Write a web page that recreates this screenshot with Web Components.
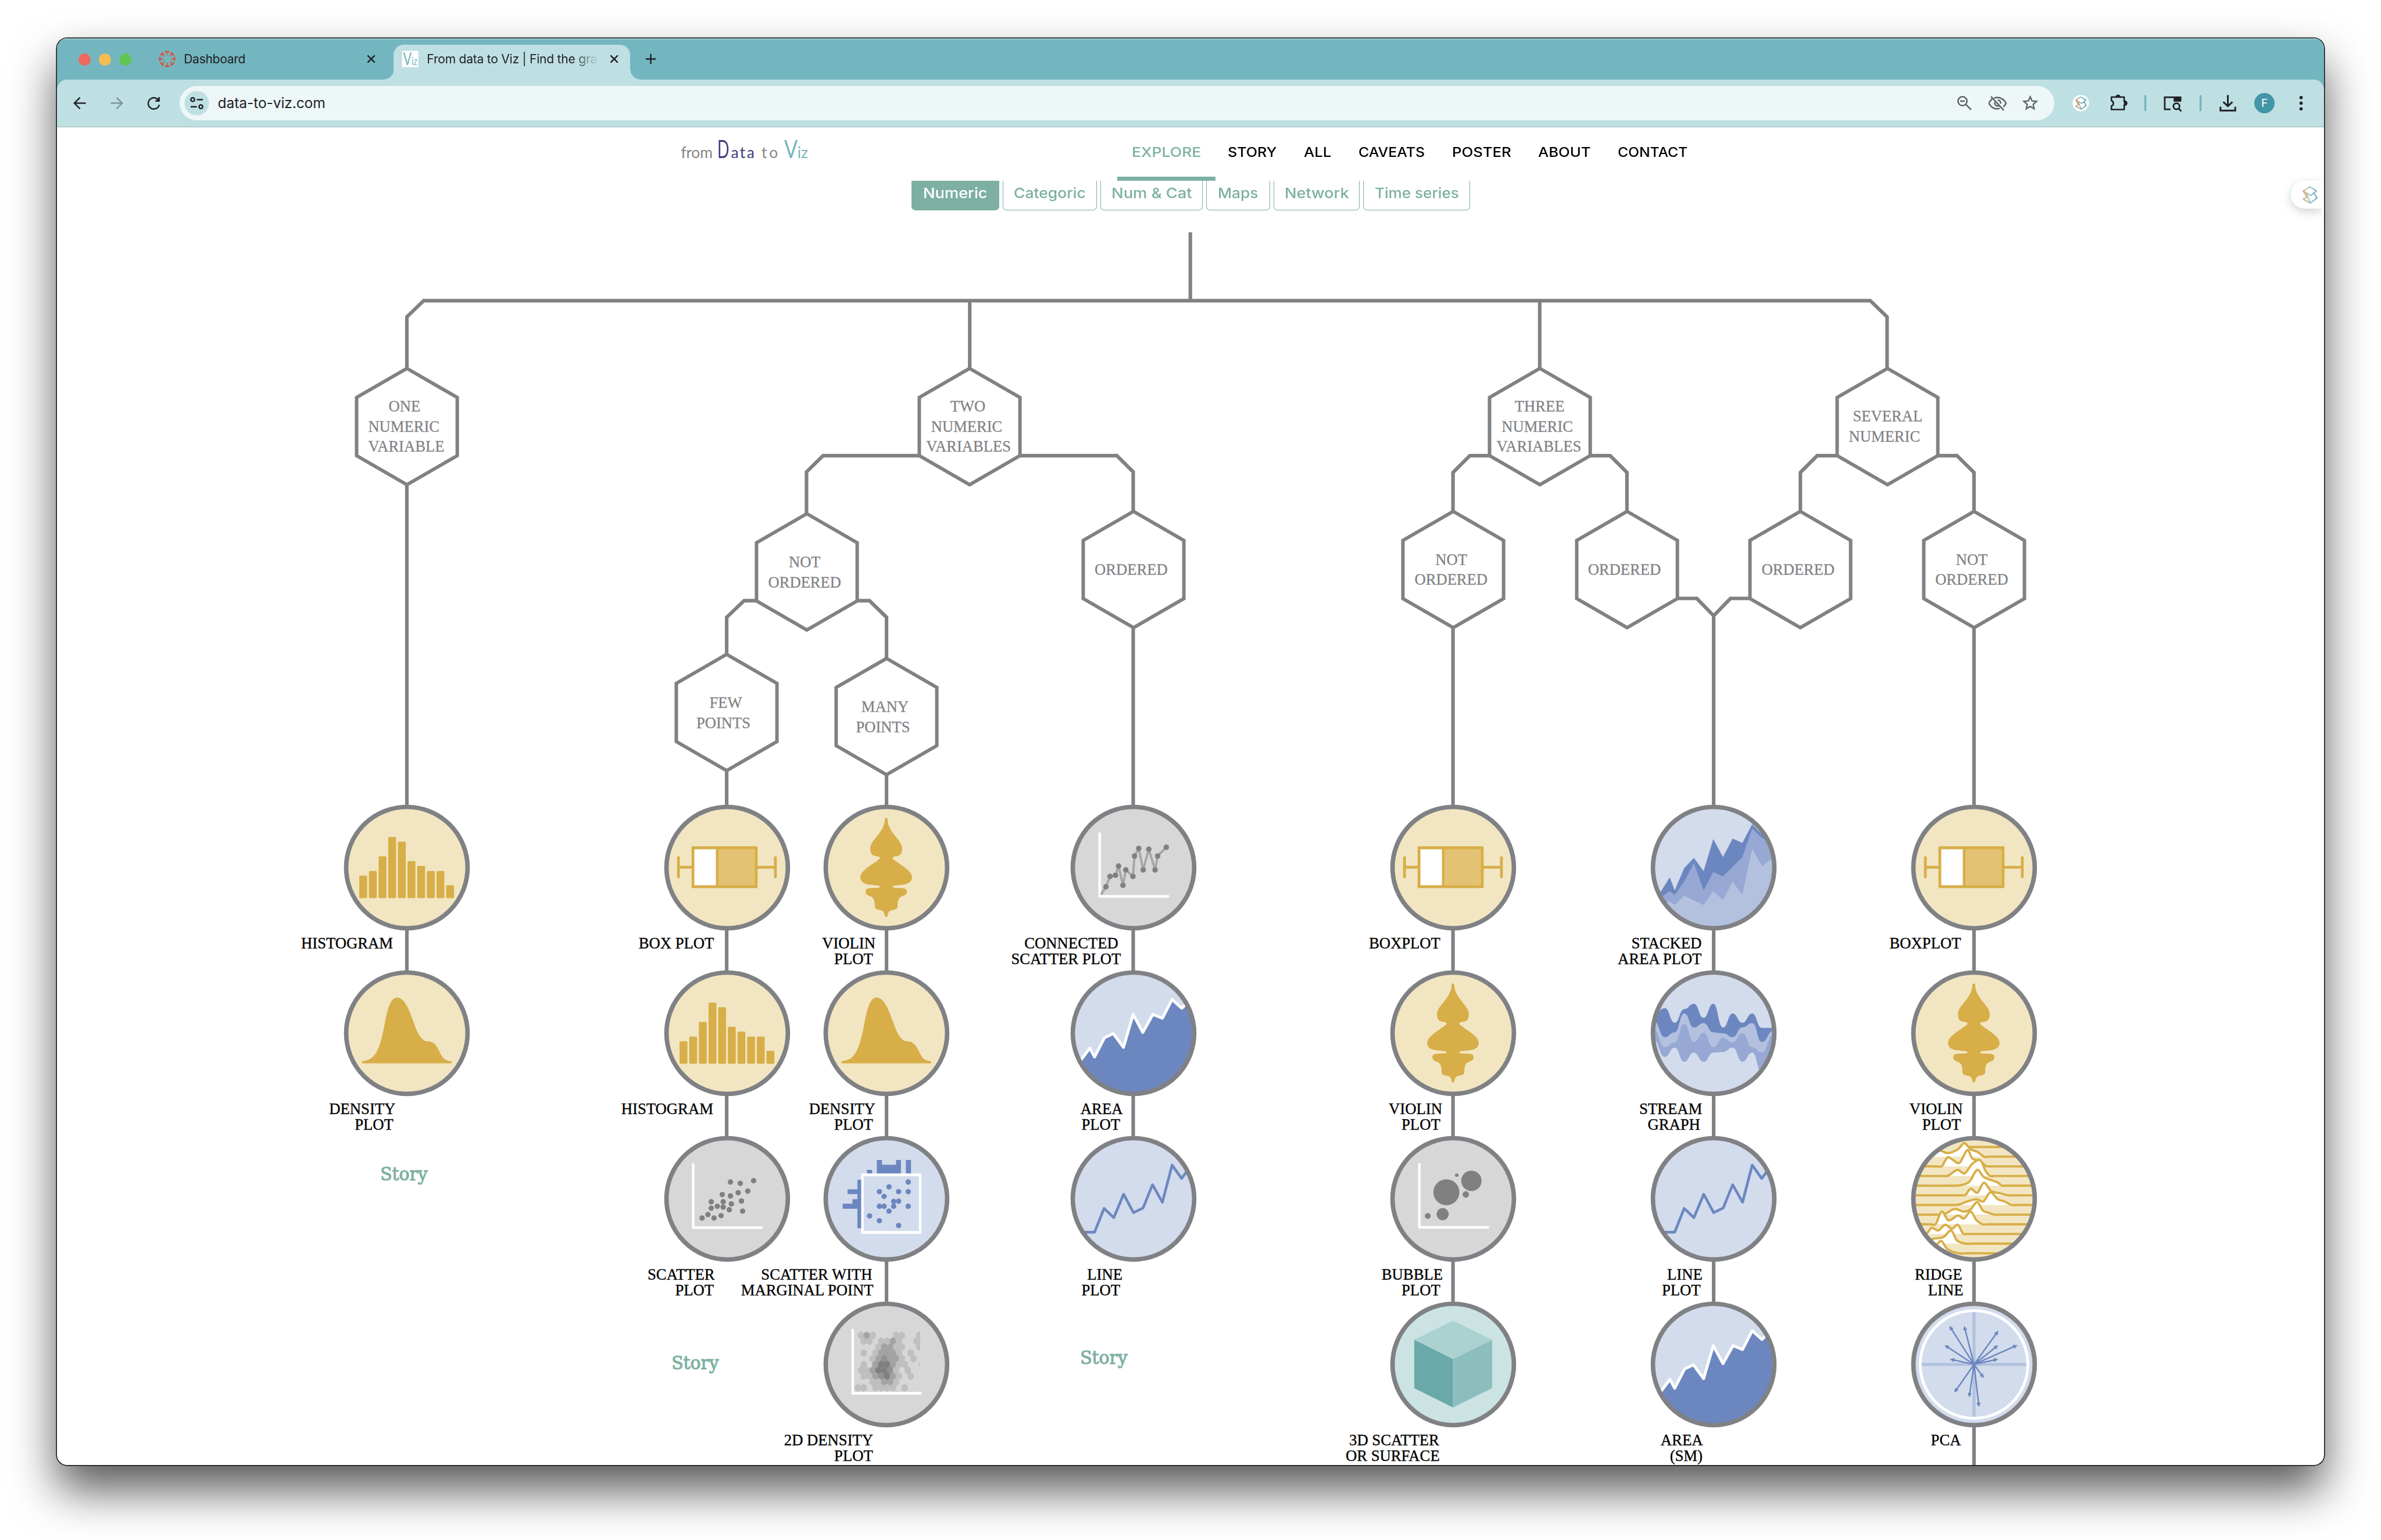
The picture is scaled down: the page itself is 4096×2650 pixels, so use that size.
<!DOCTYPE html>
<html lang="en">
<head>
<meta charset="utf-8">
<title>From data to Viz</title>
<style>
/* 1rem stands for 100 design pixels */
html{font-size:87.746px}
body{margin:0;background:#fff;width:4096px;height:2650px;overflow:hidden}
</style>
</head>
<body>
<browser-window>
  <tab-strip slot="tabs"></tab-strip>
  <tool-bar slot="toolbar"></tool-bar>
  <site-header></site-header>
  <category-tabs></category-tabs>
  <decision-tree></decision-tree>
  <side-widget slot="float"></side-widget>
</browser-window>
<script>
const R = v => (v / 100).toFixed(4) + 'rem';
const el = (name, css, html, after) => customElements.define(name, class extends HTMLElement {
  connectedCallback() {
    if (this.shadowRoot) return;
    const root = this.attachShadow({mode: 'open'});
    root.innerHTML = `<style>:host,*{box-sizing:border-box}${css}</style>` + (typeof html === 'function' ? html(this) : html);
    if (after) after(this, root);
  }
});

/* Text fitted to a given width (attribute w, in design pixels): by tracking, or by widening the glyphs with "stretch" */
el('fit-text', ':host{display:inline-block;white-space:pre;line-height:1.2}span{display:inline-block}', '<span><slot></slot></span>', (h, root) => {
  const s = root.querySelector('span'), target = +h.getAttribute('w') * .87746;
  const w = s.getBoundingClientRect().width;
  if (h.hasAttribute('stretch')) {
    s.style.transformOrigin = '0 50%';
    s.style.transform = `scaleX(${target / w})`;
    s.style.marginRight = (target - w) + 'px';
    return;
  }
  const d = (target - w) / (h.textContent.length - 1);
  s.style.letterSpacing = d + 'px';
  s.style.marginRight = -d + 'px';
});

const knot = `<defs><linearGradient id="g" gradientUnits="userSpaceOnUse" x1="-13" x2="13" y1="0" y2="0"><stop offset="0" stop-color="#e8824a"/><stop offset=".5" stop-color="#62b6a0"/><stop offset="1" stop-color="#3c7fc0"/></linearGradient></defs>
<path d="M0-16L13-8 2 1-13-8ZM-13-8L-6 4-13 8 1 16 14 6 8-4M-7-3L1 15" fill="none" stroke="url(#g)" stroke-width="2.2" stroke-linejoin="round"/>`;

el('ui-icon', `:host{display:block;flex:none;width:var(--s,.4rem);height:var(--s,.4rem)}svg{display:block;width:100%;height:100%;overflow:visible}`, h => {
  const S = (b, w = 3, c = '#202226') => `<svg viewBox="-20 -20 40 40" fill="none" stroke="${c}" stroke-width="${w}">${b}</svg>`;
  const k = h.getAttribute('name');
  const canvas = () => {
    let o = '<defs><clipPath id="c"><circle r="16"/></clipPath></defs><g clip-path="url(#c)" fill="#d9513c" stroke="none">';
    for (let i = 0; i < 8; i++) {
      const a = i * Math.PI / 4;
      o += `<circle cx="${16.5*Math.sin(a)}" cy="${16.5*Math.cos(a)}" r="4.9"/><circle cx="${9.2*Math.sin(a)}" cy="${9.2*Math.cos(a)}" r="1.5"/>`;
    }
    return o + '</g>';
  };
  return {
    canvas: () => S(canvas()),
    viz: () => S('<rect x="-16" y="-16" width="32" height="32" fill="#fff" stroke="none"/><text stroke="none" fill="#74b6bd" font-family="Lato" font-size="35" x="-14" y="12" textLength="28" lengthAdjust="spacingAndGlyphs">V<tspan font-size="22">iz</tspan></text>'),
    close: () => S('<path d="M-7-7L7 7M7-7L-7 7"/>', 2.8),
    plus: () => S('<path d="M-10 0H10M0-10V10"/>', 2.8),
    back: () => S('<path d="M11.500 0H-10M0-11L-11 0 0 11"/>', 2.8),
    fwd: () => S('<path d="M-11.500 0H10M0-11L11 0 0 11"/>', 2.8, '#7f959a'),
    reload: () => S('<path d="M9-6A11 11 0 1 0 10.800 3"/><path d="M11.500-12V-3H2.500Z" fill="#202226" stroke="none"/><path d="M10.200-12V-4.300H3"/>', 2.8),
    site: () => S('<circle r="24" fill="#bfe0e2" stroke="none"/><circle cx="-8" cy="-7" r="3.600"/><path d="M0-7H12M-12 7H0"/><circle cx="8" cy="7" r="3.600"/>', 2.8),
    zoomout: () => S('<circle cx="-4" cy="-4" r="8.800"/><path d="M2.500 2.500L13 13M-8.500-4H.5"/>', 2.8, '#5c5f61'),
    eye: () => S('<path d="M-13-13L12 14M-11-8.500C-16-3-17.500 0-16.500 1.500C-12 9-5 13 4 10M-7-10C2-13.500 12-9 16.500 0C15 3.500 13 6 11 7.500M-6-2C-6.500 3-3 6 2 6M0-6C4-6 6-3 6 1"/>', 2.8, '#5c5f61'),
    star: () => S('<path d="M0-12.500L3.600-4.400 12.500-3.600 5.800 2.300 7.800 11 0 6.400-7.800 11-5.800 2.300-12.500-3.600-3.600-4.400Z"/>', 2.6, '#5c5f61'),
    ext: () => S('<circle r="16" fill="#fff" stroke="none"/><g transform="scale(.76)">' + knot + '</g>'),
    puzzle: () => S('<path d="M-14-12H-4.500A3.500 3.500 0 0 1 2.500-12H11V-3.500A3.500 3.500 0 0 1 11 4V12.500H-14V5.500A5.500 5.500 0 0 0-14-5Z" stroke-linejoin="round"/><path d="M-4-12A4 4 0 0 1 3-12ZM12-4A4 4 0 0 1 12 4Z" fill="#202226"/>', 3),
    sep: () => S('<path d="M0-14V14" stroke-linecap="round"/>', 4, '#74b6bf'),
    panel: () => S('<path d="M-4 12H-15.500V-11.500H15.500V-4"/><path d="M2-13H16.500V-3H2Z" fill="#202226" stroke="none"/><circle cx="7.500" cy="6" r="6"/><path d="M11.500 10L17 16"/>', 3.2),
    download: () => S('<path d="M0-16V5M-9-2.500L0 6 9-2.500M-14.500 7V14.500H14.500V7"/>', 3.4),
    dots: () => S('<g fill="#202226" stroke="none"><circle cy="-11" r="3.200"/><circle r="3.200"/><circle cy="11" r="3.200"/></g>'),
    knot: () => S('<g opacity=".75">' + knot + '</g>')
  }[k]();
});

el('browser-window', `
:host{display:flex;width:4096px;height:2650px;padding:.75rem 1.12rem 1.47rem;background:#fff;overflow:hidden}
.win{position:relative;flex:1;display:flex;flex-direction:column;border-radius:.2rem;background:#fff;
 box-shadow:0 0 0 1.5px #111,0 .48rem .9rem rgba(0,0,0,.66)}
.clip{flex:1;display:flex;flex-direction:column;border-radius:.2rem;overflow:hidden;min-height:0}
.top{background:#74b6bf;box-shadow:inset 0 .02rem 0 #a2d0d5}
.page{flex:1;min-height:0;display:flex;flex-direction:column;overflow:hidden}`,
`<div class="win"><div class="clip"><div class="top"><slot name="tabs"></slot><slot name="toolbar"></slot></div><div class="page"><slot></slot></div></div><slot name="float"></slot></div>`);

el('tab-strip', `
:host{display:flex;height:.81rem;align-items:flex-end;font:.24rem Inter,sans-serif;color:#202226}
.lights{display:flex;gap:.16rem;margin:0 0 .27rem .42rem}
.lights i{width:.24rem;height:.24rem;border-radius:50%}
.tab{display:flex;align-items:center;height:.68rem;padding-bottom:.12rem}
.t1{width:4.64rem;margin-left:.5rem;padding-left:0}
.t1 fit-text{margin-left:.125rem}.t1 .x{margin-left:auto;margin-right:.24rem}
.t2{position:relative;width:4.64rem;background:#bfe0e2;border-radius:.2rem .2rem 0 0;padding-left:.12rem}
.t2:before,.t2:after{content:"";position:absolute;bottom:0;width:.2rem;height:.2rem}
.t2:before{right:100%;background:radial-gradient(circle at 0 0,transparent .2rem,#bfe0e2 .203rem)}
.t2:after{left:100%;background:radial-gradient(circle at 100% 0,transparent .2rem,#bfe0e2 .203rem)}
.t2 fit-text{margin-left:.13rem;-webkit-mask:linear-gradient(90deg,#000 86%,transparent 101%);mask:linear-gradient(90deg,#000 86%,transparent 101%)}
.x2{margin-left:.13rem}.plus{margin:0 0 .2rem .2rem}`,
`<div class="lights"><i style="background:#ee6a5f"></i><i style="background:#f5bd4f"></i><i style="background:#61c554"></i></div>
<div class="tab t1"><ui-icon name="canvas"></ui-icon><fit-text w="121">Dashboard</fit-text><ui-icon class="x" name="close"></ui-icon></div>
<div class="tab t2"><ui-icon name="viz"></ui-icon><fit-text w="334">From data to Viz | Find the gra</fit-text><ui-icon class="x2" name="close"></ui-icon></div>
<ui-icon class="plus" name="plus"></ui-icon>`);

el('tool-bar', `
:host{display:flex;align-items:center;height:.94rem;background:#bfe0e2;border-bottom:.02rem solid #9cb4b8;border-radius:.2rem .2rem 0 0;padding-left:.25rem}
.nav{display:flex;gap:.32rem}
.omni{display:flex;align-items:center;width:36.76rem;height:.68rem;border-radius:.34rem;background:#eef7f8;margin-left:.31rem;padding:0 .28rem 0 .14rem;font:.28rem Inter,sans-serif;color:#202226}
.omni fit-text{margin-left:.21rem}
.right{margin-left:auto;display:flex;gap:.24rem}
.av{width:.4rem;height:.4rem;border-radius:50%;background:#4396a8;color:#fff;font:.22rem/.4rem Inter,sans-serif;text-align:center}`,
`<div class="nav"><ui-icon name="back"></ui-icon><ui-icon name="fwd"></ui-icon><ui-icon name="reload"></ui-icon></div>
<div class="omni"><ui-icon name="site"></ui-icon><fit-text w="211">data-to-viz.com</fit-text><div class="right"><ui-icon name="zoomout"></ui-icon><ui-icon name="eye"></ui-icon><ui-icon name="star"></ui-icon></div></div>
<ui-icon style="margin-left:.32rem" name="ext"></ui-icon>
<ui-icon style="margin-left:.34rem" name="puzzle"></ui-icon>
<ui-icon style="margin-left:.12rem" name="sep"></ui-icon>
<ui-icon style="margin-left:.14rem" name="panel"></ui-icon>
<ui-icon style="margin-left:.14rem" name="sep"></ui-icon>
<ui-icon style="margin-left:.14rem" name="download"></ui-icon>
<div class="av" style="margin-left:.32rem">F</div>
<ui-icon style="margin-left:.32rem" name="dots"></ui-icon>`);

el('site-header', `
:host{display:flex;height:1.05rem;background:#fff;flex:none;font:450 .258rem Inter,sans-serif;color:#000}
.logo{display:flex;align-items:baseline;width:14.73rem;padding:.15rem 0 0 12.23rem;font:400 .3rem Lato,sans-serif;height:.75rem}
.logo fit-text{height:.55rem;line-height:.55rem;flex:none}
.d{color:#3f3d7f;margin-left:.09rem}.t{margin-left:.14rem}.v{color:#74b6bd;margin-left:.12rem}
.big{display:inline-block;font-size:.48rem;transform-origin:0 50%}
.d .big{transform:scaleX(.64);margin-right:-.12rem}
.v .big{transform:scaleX(.82);margin-right:-.06rem}
nav{display:flex;margin-left:6.055rem;gap:.53rem}
nav span{display:flex;align-items:center;padding-bottom:.09rem}
nav .on{color:#7db0a3;padding:0 .28rem;border-bottom:.09rem solid #7db0a3;margin-right:-.28rem}`,
`<div class="logo"><fit-text w="62" style="color:#858585">from</fit-text><fit-text w="73" class="d"><span class="big">D</span>ata</fit-text><fit-text w="32" class="t" style="color:#858585">to</fit-text><fit-text w="47" class="v"><span class="big">V</span>iz</fit-text></div>
<nav><span class="on"><fit-text stretch w="136">EXPLORE</fit-text></span><span><fit-text stretch w="96">STORY</fit-text></span><span><fit-text stretch w="54">ALL</fit-text></span><span><fit-text stretch w="130">CAVEATS</fit-text></span><span><fit-text stretch w="116">POSTER</fit-text></span><span><fit-text stretch w="103">ABOUT</fit-text></span><span><fit-text stretch w="137">CONTACT</fit-text></span></nav>`);

el('category-tabs', `
:host{display:flex;justify-content:flex-start;gap:.07rem;height:.58rem;padding-left:16.75rem;flex:none;font:450 .28rem Inter,sans-serif;color:#7db0a3}
div{display:flex;justify-content:center;border:.02rem solid #7db0a3;border-top:0;border-radius:0 0 .08rem .08rem;padding-top:.08rem}
.on{background:#7db0a3;color:#fff}`,
() => [['Numeric',172,126],['Categoric',184,141],['Num & Cat',201,158],['Maps',125,79],['Network',169,126],['Time series',209,165]]
 .map(([t,w,tw],i) => `<div class="${i?'':'on'}" style="width:${R(w)}"><fit-text stretch w="${tw}">${t.replace('&','&amp;')}</fit-text></div>`).join(''));

el('side-widget', `
:host{position:absolute;left:43.79rem;top:2.8rem;width:.61rem;height:.54rem;display:flex;align-items:center;padding-left:.175rem;background:#fff;border-radius:.27rem 0 0 .27rem;box-shadow:0 .06rem .2rem rgba(0,0,0,.18);clip-path:inset(-.4rem 0 -.4rem -.4rem)}`,
`<ui-icon name="knot"></ui-icon>`);

/* ---- chart glyphs: drawn around (0,0) inside a disc of radius 114.5 ---- */
const map = (cx, cy, sx, sy) => pts => pts.map(([x, y]) => [+((x - cx) / sx).toFixed(2), +((y - cy) / sy).toFixed(2)]);
const line = p => 'M' + p.map(q => q.join(' ')).join('L');
const wave = p => p.reduce((d, q, i) => i ? d + `C${(p[i-1][0]+q[0])/2} ${p[i-1][1]} ${(p[i-1][0]+q[0])/2} ${q[1]} ${q[0]} ${q[1]}` : `M${q[0]} ${q[1]}`, '');
const spline = p => p.reduce((d, q, i) => {
  if (!i) return `M${q[0]} ${q[1]}`;
  const a = p[i-2] || p[i-1], b = p[i-1], e = p[i+1] || q, k = 6;
  const cap = v => Math.max(-4, Math.min(4, v)), capx = v => Math.min(v, (q[0] - b[0]) / 2);
  return d + `C${b[0]+capx((q[0]-a[0])/k)} ${b[1]+cap((q[1]-a[1])/k)} ${q[0]-capx((e[0]-b[0])/k)} ${q[1]-cap((e[1]-b[1])/k)} ${q[0]} ${q[1]}`;
}, '');
const frame = (cx, cy, sx, sy, g) => `<g transform="scale(${1/sx} ${1/sy}) translate(${-cx} ${-cy})">${g}</g>`;
const dots = (p, r, c) => p.map(q => `<circle cx="${q[0]}" cy="${q[1]}" r="${r}" fill="${c}"/>`).join('');
const stroke = (d, c, w) => `<path d="${d}" fill="none" stroke="${c}" stroke-width="${w}" stroke-linejoin="round" stroke-linecap="round"/>`;
const GOLD = '#d7ae48', BLUE = '#6c87c0', MID = '#96a8d3', PALE = '#b3c1df';
const bg = {gold: '#f2e6c2', grey: '#d7d7d7', blue: '#d3dcec', teal: '#cbe3e3'};

const glyphs = {
  histogram: ['gold', () => [15.8,6.5,-22,-60,-51,-12.7,-3.3,6.5,6.5,34.6].map((t, i) =>
    `<rect x="${-93.3+i*18.93}" y="${t}" width="15.4" height="${59.8-t}" rx="2" fill="${GOLD}"/>`).join('')],
  density: ['gold', () => frame(1215,1088.5,2.1778,2.24, `<path fill="${GOLD}" d="M1025 1211C1080 1207 1098 1165 1120 1050C1134 970 1148 933 1173 932C1205 932 1225 985 1248 1052C1262 1095 1280 1122 1300 1124C1335 1124 1343 1147 1357 1175C1370 1203 1382 1210 1404 1211Q1410 1216 1404 1221H1026Q1020 1216 1025 1211Z"/>`)],
  box: ['gold', () => frame(534,360.5,2.1778,2.24, `<g fill="${GOLD}"><rect x="320" y="311" width="12" height="96" rx="5"/><rect x="734" y="311" width="12" height="96" rx="5"/><rect x="326" y="353" width="414" height="12"/><rect x="382" y="267" width="282" height="184" rx="4"/></g><rect x="394" y="280" width="92" height="158" fill="#fff"/><rect x="497" y="280" width="155" height="158" fill="#e3c373"/>`)],
  violin: ['gold', () => {
    const h = `<path fill="${GOLD}" d="M1213 142Q1220 142 1220 150C1221 205 1282 240 1282 275C1282 300 1275 307 1258 310Q1238 313 1241 320C1262 343 1324 370 1324 403C1324 432 1295 436 1262 438Q1241 440 1240 445Q1243 450 1262 450C1292 450 1302 452 1302 466C1302 480 1290 484 1280 487C1262 497 1264 510 1262 535C1260 548 1235 545 1227 553Q1221 560 1220 570Q1219 578 1213 578Z"/>`;
    return frame(1215,360.5,2.1778,2.24, h + `<g transform="translate(2428 0) scale(-1 1)">${h}</g>`);
  }],
  scatter: ['grey', () => { const m = map(534,289,2.1778,1.9122);
    return stroke(line(m([[389,160],[389,397],[681,397]])), '#fff', 5) + dots(m([[427,361],[452,348],[478,361],[508,352],[466,324],[466,300],[492,317],[517,300],[517,320],[543,330],[552,308],[513,273],[548,278],[581,266],[548,226],[590,231],[647,221],[622,260],[595,297],[600,335]]), 5.3, '#808080'); }],
  marginal: ['blue', () => { const m = map(1215,289,2.1778,1.9122);
    return frame(1215,289,2.1778,1.9122, `<path fill="${BLUE}" d="M1132 180h22v16h-22ZM1174 143h22v18h60v-18h21v53h-103ZM1298 143h22v53h-22ZM1091 217h20v182h-20v-73h-63v-19h42v-17h21v-19h-42v-18h42Z"/><rect x="1112.500" y="199" width="246.500" height="216" fill="${bg.blue}" stroke="#fff" stroke-width="10.500"/>`)
    + dots(m([[1308,226],[1226,244],[1185,262],[1267,262],[1308,262],[1205,280],[1246,299],[1267,298],[1185,317],[1205,317],[1246,317],[1308,317],[1226,335],[1143,353],[1185,371],[1267,389]]), 5.3, BLUE); }],
  density2d: ['grey', () => {
    const shade = {l:'#bfbfbf', m:'#a3a3a3', d:'#919191', k:'#7f7f7f'};
    const rows = [
      '1106l 1131m 1156l 1256l 1281l 1356l','1118l 1143l 1193l 1218l 1243m 1268l 1343l 1368l','1181l 1206m 1231m 1256l 1281l 1356l',
      '1118l 1168l 1193m 1218m 1243m 1268l 1318l','1156l 1181m 1206d 1231m 1256m 1281l 1331l','1118l 1168m 1193k 1218k 1243m 1268l 1293l 1368l',
      '1106l 1131l 1156m 1181k 1206k 1231d 1256l 1306l','1118l 1143l 1168m 1193d 1218k 1243m 1268l 1318l','1156l 1181l 1206m 1231m 1256l','1093l 1118l 1168l 1193l 1218l 1243l 1293l'];
    let g = '<clipPath id="k"><rect x="1076" y="780" width="283" height="240"/></clipPath><g clip-path="url(#k)">';
    rows.forEach((r, i) => r.split(' ').forEach(c => { const x = parseInt(c), y = 801 + i*21.8, f = shade[c.slice(-1)];
      g += `<path fill="${f}" stroke="${f}" stroke-width="1.500" stroke-linejoin="round" d="M${x} ${y-14.2}l12.500 7.100v14.200l-12.500 7.100l-12.500-7.100v-14.200Z"/>`; }));
    return frame(1215,910,2.1778,1.9122, g + '</g>') + stroke(line(map(1215,910,2.1778,1.9122)([[1071,781],[1071,1018],[1361,1018]])), '#fff', 5);
  }],
  connected: ['grey', () => { const p = map(786,214,3,1.3288);
    const q = p([[598,282],[624,264],[648,237],[680,234],[698,210],[724,260],[741,220],[783,237],[792,184],[817,164],[843,220],[876,166],[913,220],[928,184],[979,161]]);
    return stroke(line(p([[587,125],[587,289],[990,289]])), '#fff', 5) + stroke(line(q), '#a6a6a6', 4.5) + dots(q.slice(1), 5.4, '#808080'); }],
  area: ['blue', () => { const q = map(786,646,3,1.3288)([[440,738],[480,714],[529,685],[557,708],[615,658],[667,647],[727,683],[784,597],[841,644],[900,597],[956,607],[1013,558],[1070,581],[1130,555]]);
    return `<path fill="${BLUE}" d="${line(q)}V130H-130Z"/>` + stroke(line(q), '#fff', 5.6); }],
  line: ['blue', () => stroke(line(map(786,1078,3,1.3288)([[440,1165],[557,1165],[613,1103],[670,1127],[728,1066],[786,1114],[842,1102],[898,1041],[956,1087],[1013,990],[1069,1025],[1130,988]])), BLUE, 5.2)],
  bubble: ['grey', () => { const m = map(688,942,3,1.16148);
    return stroke(line(m([[489,863],[489,1007],[892,1007]])), '#fff', 5) + [[648,927,25.5],[795,901,20],[762,932,6.3],[709,888,3.4],[626,977,12],[538,981,5.7]].map(([x,y,r]) => dots(m([[x,y]]), r, '#808080')).join(''); }],
  cube: ['teal', () => frame(688,1320,3,1.16148, `<path fill="#abd1d1" d="M687 1220L917 1264 687 1309 459 1264Z"/><path fill="#6ba8a9" d="M459 1264L687 1308V1418L459 1374Z"/><path fill="#8dbebe" d="M917 1264L687 1308V1418L917 1374Z"/>`)],
  stacked: ['blue', () => { const m = map(659,187,3,1.16148), a = (p, c) => `<path fill="${c}" d="${line(m(p))}V130H-130Z"/>`;
    return a([[300,272],[401,209],[430,239],[486,188],[543,165],[600,195],[657,122],[714,163],[771,121],[828,131],[886,88],[944,112],[1010,130]], BLUE)
      + a([[300,266],[401,241],[430,249],[486,219],[543,177],[600,239],[657,197],[714,207],[771,185],[828,163],[886,98],[944,120],[1010,124]], MID)
      + a([[300,272],[401,264],[430,272],[486,251],[543,262],[600,272],[657,241],[714,261],[771,219],[828,249],[886,144],[944,184],[1010,163]], PALE); }],
  stream: ['blue', () => { const m = map(659,565,3,1.16148), a = (p, c) => `<path fill="${c}" d="${wave(m(p))}V130H-130Z"/>`;
    return a([[310,522],[372,508],[430,541],[486,510],[543,498],[600,530],[657,498],[714,552],[771,520],[828,541],[886,520],[943,553],[1010,553]], BLUE)
      + a([[305,536],[372,574],[430,563],[486,520],[543,552],[600,542],[657,563],[714,565],[771,574],[828,552],[886,542],[943,585],[1010,560]], PALE)
      + a([[305,555],[372,597],[430,586],[486,544],[543,585],[600,564],[657,597],[714,576],[771,586],[828,565],[886,597],[943,609],[1010,568]], MID)
      + a([[305,580],[372,619],[430,598],[486,630],[543,609],[600,630],[657,609],[714,608],[771,598],[828,630],[886,609],[943,655],[1010,655]], bg.blue); }],
  ridge: ['gold', () => { const m = map(570,942,3,1.16148);
    return [[824,[[500,824],[960,824]]],
      [846,[[300,832],[370,832],[415,838],[475,829],[512,815],[550,829],[590,835],[630,846],[660,846],[960,846]]],
      [868,[[200,868],[350,868],[380,868],[400,855],[418,847],[445,853],[485,860],[530,831],[560,850],[605,856],[640,867],[670,868],[960,868]]],
      [890,[[200,890],[390,890],[420,889],[472,876],[515,884],[560,862],[607,854],[640,880],[665,890],[690,890],[960,890]]],
      [912,[[200,912],[450,912],[490,911],[540,904],[588,876],[630,893],[705,904],[735,912],[760,912],[960,912]]],
      [934,[[200,934],[490,934],[520,933],[550,919],[590,928],[628,905],[670,924],[720,929],[770,934],[800,934],[960,934]]],
      [956,[[200,956],[430,956],[480,955],[530,948],[585,943],[625,948],[666,927],[710,943],[750,948],[790,956],[820,956],[960,956]]],
      [978,[[200,978],[360,978],[400,976],[455,965],[510,971],[550,966],[588,949],[620,968],[650,973],[690,978],[720,978],[960,978]]],
      [1000,[[200,1000],[315,1000],[345,999],[380,971],[420,991],[475,980],[510,987],[550,971],[585,991],[620,1000],[650,1000],[960,1000]]],
      [1022,[[200,1022],[290,1021],[320,1008],[360,1014],[400,1001],[440,1010],[475,1001],[505,1021],[530,1022],[960,1022]]],
      [1044,[[300,1040],[330,1033],[390,1029],[435,1014],[470,1037],[520,1044],[560,1044],[960,1044]]],
      [1066,[[320,1050],[350,1046],[378,1038],[415,1057],[480,1066],[530,1066],[960,1066]]]]
      .map(([b, p]) => { const q = m(p), by = m([[0,b]])[0][1], d = spline(q); return `<path fill="#fff" d="${d}V${by}H${q[0][0]}Z"/>` + stroke(d, GOLD, 4.4); }).join(''); }],
  pca: ['blue', () => { const m = map(570,1320,3,1.16148);
    let s = `<circle r="105.500" fill="none" stroke="#fff" stroke-width="5.500"/><path d="M-102.500 0H102.500M0-102.500V102.500" stroke="${PALE}" stroke-width="6"/>`;
    m([[425,1232],[512,1232],[397,1276],[428,1308],[713,1243],[712,1276],[825,1276],[712,1308],[628,1351],[454,1384],[541,1395],[599,1417]]).forEach(([x, y]) => {
      const a = Math.atan2(y, x) * 180 / Math.PI, L = Math.hypot(x, y);
      s += `<g transform="rotate(${a})" fill="${BLUE}"><rect y="-1.400" width="${L-5}" height="2.800"/><path d="M${L} 0l-8.500-4.200v8.400Z"/></g>`; });
    return s; }]
};

el('chart-node', `:host{position:absolute;width:2.46rem;height:2.46rem}svg{display:block;width:100%;height:100%;overflow:visible}text{font:30.400px "Liberation Serif","Times New Roman",serif;fill:#000;stroke:#000;stroke-width:.4}`, h => {
  const x = +h.getAttribute('x'), [tone, draw] = glyphs[h.getAttribute('kind')];
  const label = h.getAttribute('label').split('|').map((l, i) => { const [t, tx] = l.split('@'); return `<text x="${tx - x - .8}" y="${158.6 + i*30.3}">${t}</text>`; }).join('');
  return `<svg viewBox="-123 -123 246 246"><clipPath id="disc"><circle r="115.500"/></clipPath><circle r="117" fill="${bg[tone]}"/><g clip-path="url(#disc)">${draw()}</g><circle r="119" fill="none" stroke="#808184" stroke-width="8.800"/>${label}</svg>`;
});

el('hex-node', `:host{position:absolute;width:2.28rem;height:2.28rem}svg{display:block;width:100%;height:100%;overflow:visible}text{font:30.300px "Liberation Serif","Times New Roman",serif;fill:#808184;stroke:#808184;stroke-width:.3}`, h => {
  const x = +h.getAttribute('x'), y = +h.getAttribute('y');
  const label = h.getAttribute('label').split('|').map(l => { const [t, tx, ty] = l.split('@'); return `<text x="${tx - x - .3}" y="${ty - y}">${t}</text>`; }).join('');
  return `<svg viewBox="-114 -114 228 228"><path d="M0-114L98.700-57V57L0 114-98.700 57V-57Z" fill="#fff" stroke="#808184" stroke-width="6.800"/>${label}</svg>`;
});

el('story-link', `:host{position:absolute;width:.92rem;height:.4rem}svg{display:block;width:100%;height:100%;overflow:visible}text{font:36.500px "DejaVu Serif",serif;fill:#7db0a3;stroke:#7db0a3;stroke-width:1.300}`,
  `<svg viewBox="0 0 92 40"><text x="-1" y="30" textLength="93" lengthAdjust="spacingAndGlyphs">Story</text></svg>`);

el('decision-tree', `:host{display:block;position:relative;flex:1;min-height:0}svg{display:block;width:44.44rem;height:24.6rem}`, () => {
  const OX = 112, OY = 413;
  const at = (x, y, r) => `style="left:${R(x - OX - r)};top:${R(y - OY - r)}"`;
  const links = `<svg viewBox="112 413 4444 2460"><path fill="none" stroke="#808184" stroke-width="7" d="M2334 456V590M798 724V622L831 590H3667L3700 622V724M1901.500 590V724M3019 590V724
   M798 950V2026M1803 894H1614L1581.500 926V1008M2000 894H2190L2222 926V1004M1483 1178.500H1459L1425 1211V1284M1680 1178.500H1705L1738.400 1211V1292
   M2921 894H2882L2849 927V1004M3117 894H3157L3190 927V1004M3602 894H3563L3530 927V1004M3798 894H3837L3870.400 927V1004
   M3288 1174H3327L3360 1208L3393 1174H3432M3360 1205V2676M1425 1510V2351M1738.400 1519V2676M2222 1230V2351M2849 1230V2676M3870.400 1230V2900"/></svg>`;
  const hex = [
    [798,837,'ONE@762.4@807|NUMERIC@722.4@847|VARIABLE@722.4@886.500'],
    [1901.5,837,'TWO@1863.8@807|NUMERIC@1826.3@847|VARIABLES@1816.600@886.500'],
    [3019,837,'THREE@2970@807|NUMERIC@2944.4@847|VARIABLES@2934.3@886.500'],
    [3700,837,'SEVERAL@3632.500@826.7|NUMERIC@3624.6@867'],
    [1581.5,1121,'NOT@1546.4@1111.8|ORDERED@1506@1151.8'],
    [2222,1117,'ORDERED@2146@1127.6'],
    [1425,1397,'FEW@1391.500@1387.7|POINTS@1366@1427.7'],
    [1738.4,1405.5,'MANY@1689.500@1396.4|POINTS@1678.8@1436.4'],
    [2849,1117,'NOT@2814.3@1107.4|ORDERED@2773.500@1147'],
    [3190,1117,'ORDERED@3113.500@1127.6'],
    [3530,1117,'ORDERED@3454.500@1127.6'],
    [3870.4,1117,'NOT@3835@1107.4|ORDERED@3794.500@1147']
  ].map(([x, y, l]) => `<hex-node x="${x}" y="${y}" label="${l}" ${at(x, y, 114)}></hex-node>`).join('');
  const cols = [
    [798,[['histogram','HISTOGRAM@591.500'],['density','DENSITY@646.500|PLOT@696.500']]],
    [1425.2,[['box','BOX PLOT@1252.500'],['histogram','HISTOGRAM@1218.500'],['scatter','SCATTER@1270|PLOT@1324']]],
    [1738.4,[['violin','VIOLIN@1613|PLOT@1636.8'],['density','DENSITY@1587.500|PLOT@1636.8'],['marginal','SCATTER WITH@1493.500|MARGINAL POINT@1454'],['density2d','2D DENSITY@1538.500|PLOT@1636.8']]],
    [2222,[['connected','CONNECTED@2009|SCATTER PLOT@1983'],['area','AREA@2119|PLOT@2120.800'],['line','LINE@2132|PLOT@2120.800']]],
    [2849,[['box','BOXPLOT@2684.500'],['violin','VIOLIN@2723.500|PLOT@2748.500'],['bubble','BUBBLE@2709.500|PLOT@2748.500'],['cube','3D SCATTER@2646|OR SURFACE@2639']]],
    [3360,[['stacked','STACKED@3199.500|AREA PLOT@3172.700'],['stream','STREAM@3215|GRAPH@3231.500'],['line','LINE@3269.800|PLOT@3259.300'],['area','AREA@3257|(SM)@3275']]],
    [3870.4,[['box','BOXPLOT@3705.500'],['violin','VIOLIN@3744.500|PLOT@3769.500'],['ridge','RIDGE@3755|LINE@3781'],['pca','PCA@3786.500']]]
  ].map(([x, list]) => list.map(([k, l], i) => `<chart-node kind="${k}" x="${x}" label="${l}" ${at(x, 1701 + i*325, 123)}></chart-node>`).join('')).join('');
  const story = [[746.5,2285],[1317.5,2655],[2119,2645]].map(([x, y]) => `<story-link ${at(x, y, 0)}></story-link>`).join('');
  return links + hex + cols + story;
});
</script>
</body>
</html>
